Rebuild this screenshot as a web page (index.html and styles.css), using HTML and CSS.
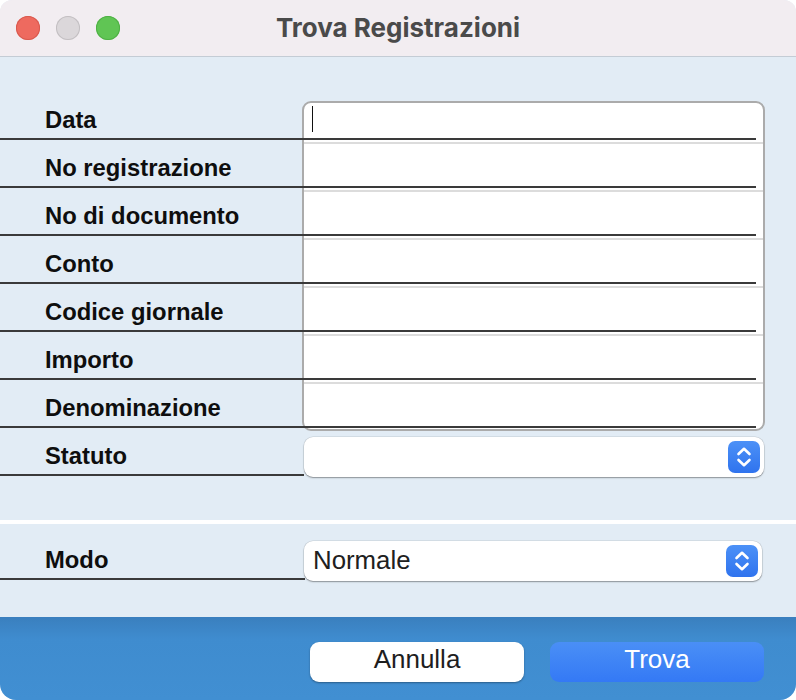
FILE: index.html
```html
<!DOCTYPE html>
<html lang="it">
<head>
<meta charset="utf-8">
<title>Trova Registrazioni</title>
<link rel="stylesheet" href="styles.css">
</head>
<body>
<div class="window">
  <header class="titlebar">
    <div class="lights">
      <span class="light light-red"></span>
      <span class="light light-gray"></span>
      <span class="light light-green"></span>
    </div>
    <h1 class="title">Trova Registrazioni</h1>
    <div class="titlebar-end"></div>
  </header>

  <main class="content">
    <div class="fields">
      <div class="fields-box">
        <div class="box-cell box-cell-first"><span class="caret"></span></div>
        <div class="box-cell"></div>
        <div class="box-cell"></div>
        <div class="box-cell"></div>
        <div class="box-cell"></div>
        <div class="box-cell"></div>
        <div class="box-cell box-cell-last"></div>
      </div>
      <div class="fields-rows">
        <div class="row"><span class="label">Data</span></div>
        <div class="row"><span class="label">No registrazione</span></div>
        <div class="row"><span class="label">No di documento</span></div>
        <div class="row"><span class="label">Conto</span></div>
        <div class="row"><span class="label">Codice giornale</span></div>
        <div class="row"><span class="label">Importo</span></div>
        <div class="row"><span class="label">Denominazione</span></div>
      </div>
    </div>

    <div class="select-row">
      <div class="select-label"><span class="label">Statuto</span></div>
      <div class="popup popup-statuto">
        <span class="popup-value"></span>
        <span class="stepper">
          <svg viewBox="0 0 32 32" width="32" height="32"><path d="M10.5 13 L16 7.8 L21.5 13" /><path d="M10.5 19 L16 24.2 L21.5 19" /></svg>
        </span>
      </div>
    </div>

    <div class="separator"></div>

    <div class="select-row select-row-modo">
      <div class="select-label select-label-modo"><span class="label">Modo</span></div>
      <div class="popup popup-modo">
        <span class="popup-value">Normale</span>
        <span class="stepper">
          <svg viewBox="0 0 32 32" width="32" height="32"><path d="M10.5 13 L16 7.8 L21.5 13" /><path d="M10.5 19 L16 24.2 L21.5 19" /></svg>
        </span>
      </div>
    </div>
  </main>

  <footer class="footer">
    <button class="btn btn-cancel" type="button">Annulla</button>
    <button class="btn btn-primary" type="button">Trova</button>
  </footer>
</div>
</body>
</html>
```

FILE: styles.css
```css
* { box-sizing: border-box; }

html, body {
  margin: 0;
  padding: 0;
  background: #ffffff;
}

body {
  width: 796px;
  height: 700px;
  overflow: hidden;
  font-family: "Liberation Sans", Arial, sans-serif;
}

.window {
  width: 796px;
  height: 700px;
  border-radius: 12px 12px 16px 16px;
  overflow: hidden;
  display: flex;
  flex-direction: column;
  background: #e2ecf5;
}

/* ---------- title bar ---------- */
.titlebar {
  height: 57px;
  flex: 0 0 57px;
  background: #f2edf1;
  border-bottom: 1px solid #c4ccd5;
  display: grid;
  grid-template-columns: 1fr auto 1fr;
  align-items: center;
}

.lights {
  display: flex;
  gap: 16px;
  padding-left: 16px;
}

.light {
  width: 24px;
  height: 24px;
  border-radius: 50%;
  display: block;
}

.light-red { background: #ee6a5f; box-shadow: inset 0 0 0 1px #d85a4f; }
.light-gray { background: #dbd7da; box-shadow: inset 0 0 0 1px #c3bfc2; }
.light-green { background: #60c554; box-shadow: inset 0 0 0 1px #4fb045; }

.title {
  margin: 0;
  font-family: "Inter", "Liberation Sans", sans-serif;
  font-weight: 700;
  font-size: 26px;
  color: #4a4a4a;
  letter-spacing: 0;
  line-height: 1;
  padding-bottom: 0;
}

/* ---------- content ---------- */
.content {
  height: 560px;
  flex: 0 0 560px;
  padding-top: 35px;
  display: flex;
  flex-direction: column;
}

.fields {
  display: grid;
  grid-template-columns: 796px;
}

.fields-box {
  grid-area: 1 / 1;
  margin-left: 302px;
  margin-top: 9px;
  margin-bottom: -3px;
  width: 463px;
  height: 330px;
  background: #ffffff;
  border: 2px solid #ababab;
  border-radius: 9px;
  display: flex;
  flex-direction: column;
}

.box-cell {
  height: 48px;
  flex: 0 0 48px;
  border-top: 2px solid #dcdcdc;
}

.box-cell-first {
  height: 39px;
  flex: 0 0 39px;
  border-top: none;
  padding-left: 8px;
  padding-top: 3px;
}

.box-cell-last {
  flex: 1 1 auto;
}

.caret {
  display: block;
  width: 1px;
  height: 26px;
  background: #111;
}

.fields-rows {
  grid-area: 1 / 1;
  z-index: 1;
  display: flex;
  flex-direction: column;
}

.row {
  width: 756px;
  height: 48px;
  border-bottom: 2px solid #3a3a3a;
  display: flex;
  align-items: flex-end;
  padding-bottom: 6px;
}

.label {
  display: block;
  padding-left: 45px;
  font-family: "Liberation Sans", Arial, sans-serif;
  font-weight: 700;
  font-size: 23.8px;
  line-height: 24px;
  color: #0e0e0e;
  white-space: nowrap;
}

/* ---------- popups ---------- */
.select-row {
  display: flex;
  height: 48px;
  align-items: flex-start;
}

.select-label {
  width: 304px;
  height: 48px;
  flex: 0 0 304px;
  border-bottom: 2px solid #3a3a3a;
  display: flex;
  align-items: flex-end;
  padding-bottom: 6px;
}

.select-label-modo {
  width: 305px;
  flex-basis: 305px;
}

.popup {
  margin-top: 9px;
  height: 40px;
  background: #ffffff;
  border-radius: 9px;
  box-shadow: 0 0 0 0.5px rgba(0, 0, 0, 0.12), 0 1px 1.5px rgba(0, 0, 0, 0.35);
  display: flex;
  align-items: center;
  justify-content: space-between;
  padding-right: 4px;
  padding-left: 9px;
}

.popup-statuto { width: 460px; }
.popup-modo { width: 458px; margin-left: -1px; }

.popup-value {
  font-family: "Liberation Sans", Arial, sans-serif;
  font-size: 25.8px;
  color: #202020;
  line-height: 40px;
  padding-bottom: 3px;
}

.stepper {
  width: 32px;
  height: 32px;
  border-radius: 7px;
  background: linear-gradient(#4c91f7, #2f73ee);
  display: block;
}

.stepper svg {
  display: block;
  fill: none;
  stroke: #ffffff;
  stroke-width: 2.6;
  stroke-linecap: round;
  stroke-linejoin: round;
}

.separator {
  margin-top: 44px;
  height: 4px;
  background: #ffffff;
}

.select-row-modo {
  margin-top: 8px;
}

/* ---------- footer ---------- */
.footer {
  height: 83px;
  flex: 0 0 83px;
  background: linear-gradient(#3a7fbe 0px, #3f8ccf 22px, #418fd2 83px);
  display: flex;
  justify-content: flex-end;
  align-items: flex-start;
  gap: 26px;
  padding-top: 25px;
  padding-right: 32px;
}

.btn {
  width: 214px;
  height: 40px;
  border: none;
  border-radius: 9px;
  font-family: "Liberation Sans", Arial, sans-serif;
  font-size: 26px;
  line-height: 35px;
  padding: 0 0 5px 0;
  margin: 0;
}

.btn-cancel {
  background: #ffffff;
  color: #1e1e1e;
  box-shadow: 0 1px 2px rgba(0, 0, 0, 0.35);
}

.btn-primary {
  background: linear-gradient(#4a8ff6, #3479f5);
  color: #ffffff;
}
```
